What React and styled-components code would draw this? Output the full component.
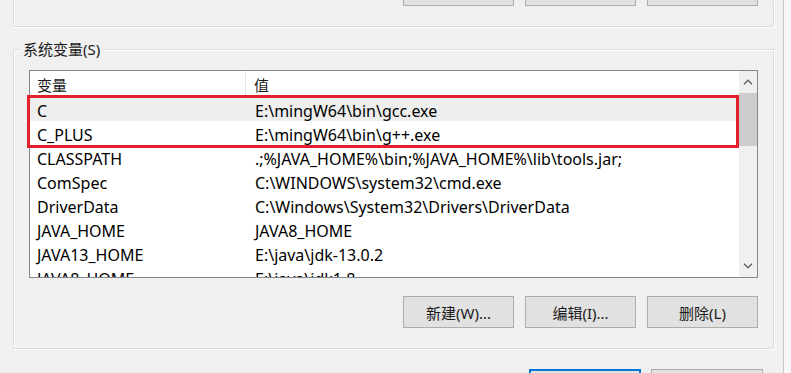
import React from 'react';
import styled, { createGlobalStyle } from 'styled-components';

const GlobalStyle = createGlobalStyle`
  html, body {
    margin: 0;
    padding: 0;
    background: #f7f7f7;
    overflow: hidden;
  }
  * {
    box-sizing: border-box;
  }
`;

const uiFont = `"Noto Sans", "Noto Sans CJK SC", sans-serif`;

const Window = styled.div`
  width: 784px;
  height: 373px;
  padding-left: 13px;
  background: #f0f0f0;
  border-right: 1px solid #c9c9c9;
  overflow: hidden;
  font-family: ${uiFont};
  color: #000;
`;

const TopGroup = styled.div`
  width: 761px;
  height: 27px;
  border: 1px solid #dcdcdc;
  border-top: none;
  box-shadow: 1px 1px 0 #fff, inset 1px 0 0 #fff;
  display: flex;
  justify-content: flex-end;
  align-items: flex-end;
  padding: 0 15px 20px 0;
  overflow: hidden;
`;

const SystemGroup = styled.div`
  position: relative;
  width: 761px;
  margin-top: 22px;
  border: 1px solid #dcdcdc;
  box-shadow: 1px 1px 0 #fff, inset 1px 1px 0 #fff;
  padding: 20px 15px 20px 15px;
`;

const Legend = styled.div`
  position: absolute;
  top: -11px;
  left: 6px;
  padding: 0 3px;
  background: #f0f0f0;
  font-size: 15px;
  line-height: 20px;
  color: #1a1a1a;
`;

const List = styled.div`
  position: relative;
  display: flex;
  height: 208px;
  border: 1px solid #828790;
  background: #fff;
`;

const Table = styled.div`
  flex: 1;
  overflow: hidden;
`;

const HeaderRow = styled.div`
  display: grid;
  grid-template-columns: 216px 1fr;
  height: 26px;
  font-size: 15px;
  color: #1a1a1a;
`;

const HeaderCell = styled.div`
  display: flex;
  align-items: center;
  padding-left: ${(p) => (p.$first ? '7px' : '8px')};
  border-right: ${(p) => (p.$first ? '1px solid #e5e5e5' : 'none')};
`;

const Row = styled.div`
  display: grid;
  grid-template-columns: 216px 1fr;
  height: 24px;
  overflow: hidden;
  font-size: 16px;
  line-height: 24px;
  white-space: nowrap;
  background: ${(p) => (p.$selected ? '#eeeeee' : '#fff')};
`;

const Cell = styled.div`
  padding-top: 2px;
  padding-left: ${(p) => (p.$first ? '7px' : '9px')};
  overflow: hidden;
`;

const Scrollbar = styled.div`
  width: 18px;
  display: flex;
  flex-direction: column;
  background: #f0f0f0;
`;

const ArrowButton = styled.div`
  height: ${(p) => p.$h}px;
  display: flex;
  align-items: center;
  justify-content: center;
`;

const Track = styled.div`
  flex: 1;
`;

const Thumb = styled.div`
  height: 53px;
  background: #cdcdcd;
`;

const Highlight = styled.div`
  position: absolute;
  left: -3px;
  top: 24px;
  width: 712px;
  height: 53px;
  border: 3px solid #e3202b;
  pointer-events: none;
`;

const ButtonRow = styled.div`
  display: flex;
  justify-content: flex-end;
  gap: 11px;
  margin-top: ${(p) => (p.$flush ? 0 : 18)}px;
`;

const Button = styled.button`
  width: ${(p) => p.$w || 111}px;
  height: 32px;
  flex: none;
  border: ${(p) => (p.$primary ? '2px solid #0078d7' : '1px solid #adadad')};
  background: #e1e1e1;
  font-family: ${uiFont};
  font-size: 15px;
  color: #1a1a1a;
  padding: 0;
`;

const FooterRow = styled.div`
  display: flex;
  justify-content: flex-end;
  gap: 10px;
  margin-top: 20px;
  padding-right: 20px;
`;

const Chevron = ({ up }) => (
  <svg width="10" height="6" viewBox="0 0 10 6">
    <path
      d={up ? 'M1 5.2 L5 1.2 L9 5.2' : 'M1 0.8 L5 4.8 L9 0.8'}
      fill="none"
      stroke="#606060"
      strokeWidth="1.3"
    />
  </svg>
);

const rows = [
  ['C', 'E:\\mingW64\\bin\\gcc.exe'],
  ['C_PLUS', 'E:\\mingW64\\bin\\g++.exe'],
  ['CLASSPATH', '.;%JAVA_HOME%\\bin;%JAVA_HOME%\\lib\\tools.jar;'],
  ['ComSpec', 'C:\\WINDOWS\\system32\\cmd.exe'],
  ['DriverData', 'C:\\Windows\\System32\\Drivers\\DriverData'],
  ['JAVA_HOME', 'JAVA8_HOME'],
  ['JAVA13_HOME', 'E:\\java\\jdk-13.0.2'],
  ['JAVA8_HOME', 'E:\\java\\jdk1.8'],
];

const App = () => {
  return (
    <Window>
      <GlobalStyle />
      {/* user-variable buttons, scrolled mostly out of view */}
      <TopGroup>
        <ButtonRow $flush>
          <Button />
          <Button />
          <Button />
        </ButtonRow>
      </TopGroup>

      <SystemGroup>
        <Legend>系统变量(S)</Legend>
        <List>
          <Table>
            <HeaderRow>
              <HeaderCell $first>变量</HeaderCell>
              <HeaderCell>值</HeaderCell>
            </HeaderRow>
            {rows.map(([name, value], i) => (
              <Row key={name} $selected={i === 0}>
                <Cell $first>{name}</Cell>
                <Cell>{value}</Cell>
              </Row>
            ))}
          </Table>
          <Scrollbar>
            <ArrowButton $h={22}>
              <Chevron up />
            </ArrowButton>
            <Thumb />
            <Track />
            <ArrowButton $h={22}>
              <Chevron />
            </ArrowButton>
          </Scrollbar>
          <Highlight />
        </List>
        <ButtonRow>
          <Button>新建(W)...</Button>
          <Button>编辑(I)...</Button>
          <Button>删除(L)</Button>
        </ButtonRow>
      </SystemGroup>

      <FooterRow>
        <Button $primary $w={112} />
        <Button $w={112} />
      </FooterRow>
    </Window>
  );
};

export default App;
